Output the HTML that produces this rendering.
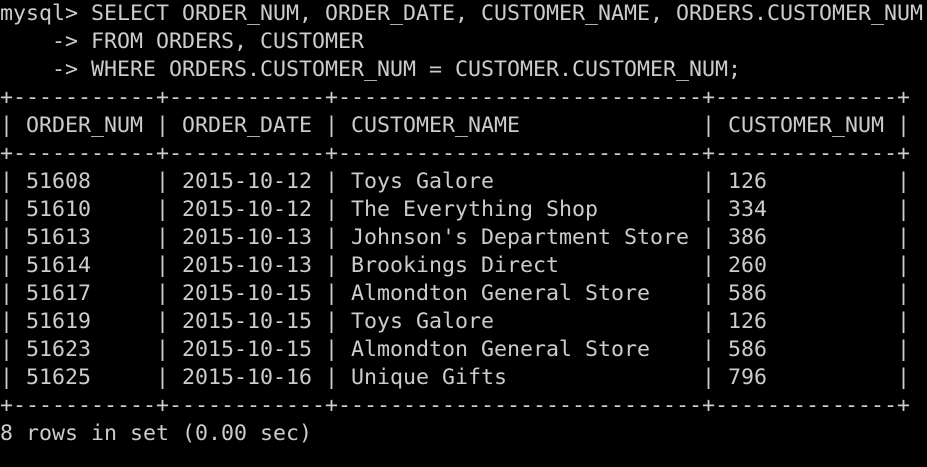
<!DOCTYPE html>
<html><head><meta charset="utf-8"><style>
html,body{margin:0;padding:0;background:#000;width:927px;height:467px;overflow:hidden}
pre{margin:0;padding:0;color:#cccccc;font-family:"DejaVu Sans Mono","Liberation Mono",monospace;font-size:21.6px;line-height:28px;white-space:pre}
</style></head><body><pre>mysql&gt; SELECT ORDER_NUM, ORDER_DATE, CUSTOMER_NAME, ORDERS.CUSTOMER_NUM
    -&gt; FROM ORDERS, CUSTOMER
    -&gt; WHERE ORDERS.CUSTOMER_NUM = CUSTOMER.CUSTOMER_NUM;
+-----------+------------+----------------------------+--------------+
| ORDER_NUM | ORDER_DATE | CUSTOMER_NAME              | CUSTOMER_NUM |
+-----------+------------+----------------------------+--------------+
| 51608     | 2015-10-12 | Toys Galore                | 126          |
| 51610     | 2015-10-12 | The Everything Shop        | 334          |
| 51613     | 2015-10-13 | Johnson's Department Store | 386          |
| 51614     | 2015-10-13 | Brookings Direct           | 260          |
| 51617     | 2015-10-15 | Almondton General Store    | 586          |
| 51619     | 2015-10-15 | Toys Galore                | 126          |
| 51623     | 2015-10-15 | Almondton General Store    | 586          |
| 51625     | 2015-10-16 | Unique Gifts               | 796          |
+-----------+------------+----------------------------+--------------+
8 rows in set (0.00 sec)
</pre></body></html>
